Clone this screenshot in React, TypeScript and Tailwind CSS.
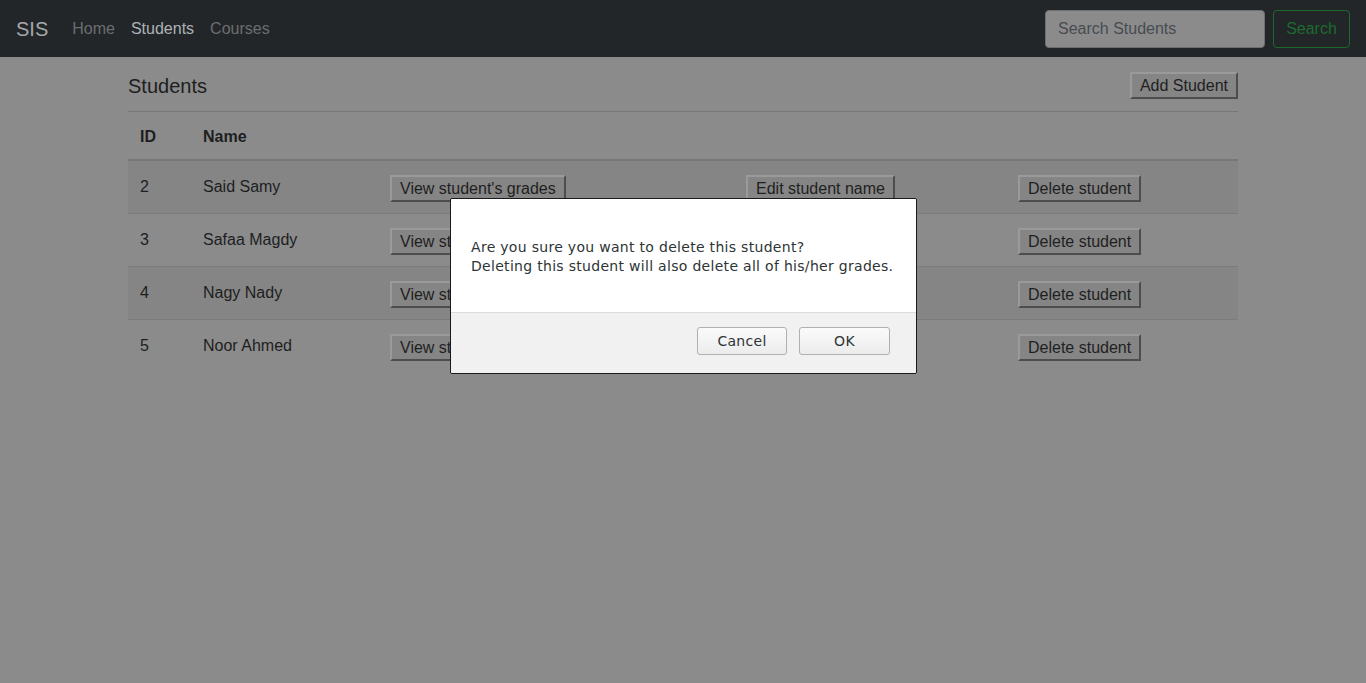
import React from "react";

const students = [
  { id: 2, name: "Said Samy" },
  { id: 3, name: "Safaa Magdy" },
  { id: 4, name: "Nagy Nady" },
  { id: 5, name: "Noor Ahmed" },
];

function RawButton({ children }: { children: React.ReactNode }) {
  return (
    <button className="h-[27px] border-2 border-b-[#4d4d4d] border-l-[#9a9a9a] border-r-[#4d4d4d] border-t-[#9a9a9a] bg-[#858585] px-[8px] text-[16px] leading-[20px] text-[#1f1f1f]">
      {children}
    </button>
  );
}

export default function App() {
  return (
    <div className="min-h-[683px] bg-[#8b8b8b] font-['Liberation_Sans',Arial,sans-serif] text-[#1d1e1f]">
      <nav className="flex h-[57px] items-center bg-[#232629] px-4">
        <span className="mr-6 text-[20px] text-[#a4a8ac]">SIS</span>
        <div className="flex gap-4 text-[16px]">
          <span className="text-[#6b6e71]">Home</span>
          <span className="text-[#aeb2b6]">Students</span>
          <span className="text-[#6b6e71]">Courses</span>
        </div>
        <div className="ml-auto flex items-center gap-2">
          <div className="flex h-[38px] w-[220px] items-center rounded-[4px] border border-[#6e6e6e] bg-[#8b8b8b] px-3 text-[16px] text-[#474c51]">
            Search Students
          </div>
          <div className="flex h-[38px] w-[77px] items-center justify-center rounded-[4px] border border-[#1b6a2b] text-[16px] text-[#1c6b2d]">
            Search
          </div>
        </div>
      </nav>

      <div className="mx-auto w-[1110px]">
        <div className="flex h-[54px] items-end justify-between pb-[12px]">
          <h2 className="pb-[1px] text-[20px] leading-[24px]">Students</h2>
          <RawButton>Add Student</RawButton>
        </div>
        <div className="border-t border-[#777]">
          <div className="grid h-[49px] grid-cols-[63px_187px_356px_272px_232px] items-center border-b-2 border-[#777] pt-[2px] text-[16px] font-bold">
            <div className="px-3">ID</div>
            <div className="px-3">Name</div>
          </div>
          {students.map((s, i) => (
            <div
              key={s.id}
              className={`grid h-[53px] grid-cols-[63px_187px_356px_272px_232px] text-[16px] ${
                i < students.length - 1 ? "border-b border-[#7b7b7b]" : ""
              } ${i % 2 === 0 ? "bg-[#858585]" : "bg-[#8b8b8b]"}`}
            >
              <div className="px-3 pt-[14px]">{s.id}</div>
              <div className="px-3 pt-[14px]">{s.name}</div>
              <div className="px-3 pt-[14px]">
                <RawButton>View student's grades</RawButton>
              </div>
              <div className="px-3 pt-[14px]">
                <RawButton>Edit student name</RawButton>
              </div>
              <div className="px-3 pt-[14px]">
                <RawButton>Delete student</RawButton>
              </div>
            </div>
          ))}
        </div>
      </div>

      <div className="absolute left-[450px] top-[198px] w-[467px] overflow-hidden rounded-[2px] border border-[#1a1a1a] font-['DejaVu_Sans',sans-serif] text-[14px] tracking-[0.3px] text-[#2e3436]">
        <div className="h-[113px] bg-white px-5 pt-[39px] leading-[19px]">
          <p>Are you sure you want to delete this student?</p>
          <p>Deleting this student will also delete all of his/her grades.</p>
        </div>
        <div className="flex h-[61px] items-start justify-end gap-3 border-t border-[#dcdcdc] bg-[#f1f1f1] pr-[26px] pt-[14px]">
          <button className="h-[28px] w-[90px] rounded-[3px] border border-[#b0b0b0] bg-gradient-to-b from-[#fafafa] to-[#ececec] text-[14px] tracking-[0.3px] text-[#2e3436]">
            Cancel
          </button>
          <button className="h-[28px] w-[91px] rounded-[3px] border border-[#b0b0b0] bg-gradient-to-b from-[#fafafa] to-[#ececec] text-[14px] tracking-[0.3px] text-[#2e3436]">
            OK
          </button>
        </div>
      </div>
    </div>
  );
}
